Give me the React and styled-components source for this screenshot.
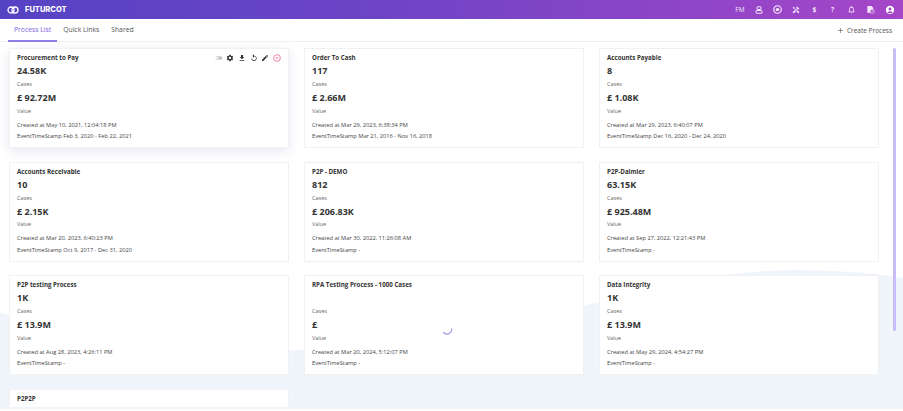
import React from 'react'
import styled, { createGlobalStyle } from 'styled-components'
import { Plus } from 'lucide-react'
import { MdSettings, MdFileDownload, MdReplay, MdEdit, MdToggleOff, MdAccountCircle, MdOutlineNotifications, MdHandyman } from 'react-icons/md'

const GlobalStyle = createGlobalStyle`
  html, body { margin: 0; padding: 0; height: 100%; background: #fff; overflow: hidden; }
  body { font-family: "Open Sans", "Noto Sans", sans-serif; color: #333; }
`

const Page = styled.div`
  position: relative;
  width: 903px;
  height: 411px;
  overflow: hidden;
  background: #fff;
`

const Header = styled.header`
  height: 19px;
  display: flex;
  align-items: center;
  justify-content: space-between;
  padding: 0 8px 0 7px;
  background: linear-gradient(90deg, #5543c4 0%, #6c44c6 40%, #a646c8 100%);
  color: #fff;
`

const Brand = styled.div`
  display: flex;
  align-items: center;
  gap: 6px;
  font-family: "Inter", sans-serif;
  font-size: 7.5px;
  font-weight: 800;
`

const HeaderIcons = styled.div`
  display: flex;
  align-items: center;
  gap: 10.2px;
  color: #f3e6fa;
`

const HeaderText = styled.span`
  font-size: 6.5px;
  font-weight: ${props => props.bold ? 700 : 400};
  width: ${props => props.bold ? '8px' : 'auto'};
  text-align: center;
  line-height: 8px;
`

const TabBar = styled.div`
  height: 22px;
  display: flex;
  align-items: stretch;
  justify-content: space-between;
  padding: 0 11px 0 8px;
  border-bottom: 1px solid #eef0f2;
`

const Tabs = styled.div`
  display: flex;
`

const Tab = styled.div`
  display: flex;
  align-items: center;
  padding: 0 6px;
  font-size: 6.8px;
  color: ${props => props.active ? '#7b66e0' : '#555'};
  border-bottom: 2px solid ${props => props.active ? '#8f7ce8' : 'transparent'};
  margin-bottom: -1px;
`

const CreateButton = styled.div`
  display: flex;
  align-items: center;
  gap: 3px;
  font-size: 6.5px;
  color: #555;
`

const Wave = styled.svg`
  position: absolute;
  left: 0;
  top: 262px;
  width: 903px;
  height: 147px;
`

const Content = styled.main`
  position: relative;
  height: 365px;
  overflow: hidden;
  padding: 6px 0 0 9px;
  box-sizing: border-box;
`

const Grid = styled.div`
  display: grid;
  grid-template-columns: repeat(3, 280px);
  grid-auto-rows: 100px;
  gap: 13.7px 15px;
`

const Card = styled.article`
  position: relative;
  box-sizing: border-box;
  height: ${props => props.partial ? '17.5px' : '100px'};
  background: #fff;
  border: 1px solid #f0f1f3;
  border-bottom: ${props => props.partial ? 'none' : '1px solid #f0f1f3'};
  padding: 4px 7px;
  box-shadow: ${props => props.raised ? '0 3px 10px rgba(90, 80, 160, 0.14)' : 'none'};
`

const Title = styled.div`
  height: 10px;
  line-height: 10px;
  font-size: 6.2px;
  font-weight: 700;
  color: #333;
`

const Metric = styled.div`
  height: 13px;
  line-height: 13px;
  margin-top: ${props => props.first ? '1px' : '2px'};
  font-size: 9px;
  font-weight: 700;
  color: #333;
`

const Label = styled.div`
  height: 10px;
  line-height: 10px;
  margin-top: ${props => props.tight ? '1.5px' : '2px'};
  font-size: 5.5px;
  color: #666;
`

const Meta = styled.div`
  height: 11.5px;
  line-height: 11.5px;
  font-size: 5.7px;
  color: #444;
  white-space: nowrap;
`

const MetaGroup = styled.div`
  margin-top: 4px;
`

const Actions = styled.div`
  position: absolute;
  top: 5px;
  right: 7px;
  display: flex;
  align-items: center;
  gap: 3.7px;
  color: #333;
`

const Spinner = styled.svg`
  position: absolute;
  left: 441px;
  top: 323px;
  width: 12px;
  height: 12px;
`

const ScrollThumb = styled.div`
  position: absolute;
  left: 893px;
  top: 48px;
  width: 3px;
  height: 283px;
  border-radius: 2px;
  background: #c9bdf7;
`

const processes = [
  { title: 'Procurement to Pay', cases: '24.58K', value: '£ 92.72M', created: 'May 10, 2021, 12:04:18 PM', stamp: 'Feb 3, 2020 - Feb 22, 2021', raised: true },
  { title: 'Order To Cash', cases: '117', value: '£ 2.66M', created: 'Mar 29, 2023, 6:38:34 PM', stamp: 'Mar 21, 2016 - Nov 16, 2018' },
  { title: 'Accounts Payable', cases: '8', value: '£ 1.08K', created: 'Mar 29, 2023, 6:40:07 PM', stamp: 'Dec 16, 2020 - Dec 24, 2020' },
  { title: 'Accounts Receivable', cases: '10', value: '£ 2.15K', created: 'Mar 20, 2023, 6:40:23 PM', stamp: 'Oct 9, 2017 - Dec 31, 2020' },
  { title: 'P2P - DEMO', cases: '812', value: '£ 206.83K', created: 'Mar 30, 2022, 11:26:08 AM', stamp: '-' },
  { title: 'P2P-Daimler', cases: '63.15K', value: '£ 925.48M', created: 'Sep 27, 2022, 12:21:43 PM', stamp: '-' },
  { title: 'P2P testing Process', cases: '1K', value: '£ 13.9M', created: 'Aug 28, 2023, 4:26:11 PM', stamp: '-' },
  { title: 'RPA Testing Process - 1000 Cases', cases: '', value: '£', created: 'Mar 20, 2024, 5:12:07 PM', stamp: '-' },
  { title: 'Data Integrity', cases: '1K', value: '£ 13.9M', created: 'May 29, 2024, 4:54:27 PM', stamp: '-' },
]

const Logo = () => (
  <svg width="12" height="8" viewBox="0 0 24 16" fill="none" stroke="#fff" strokeWidth="2.6">
    <circle cx="8" cy="8" r="6" />
    <circle cx="16" cy="8" r="6" />
  </svg>
)

const PrinterIcon = () => (
  <svg width="8" height="8" viewBox="0 0 16 16" fill="none" stroke="currentColor" strokeWidth="2">
    <rect x="4" y="1.5" width="8" height="5.5" rx="1" />
    <rect x="2" y="9" width="12" height="5.5" rx="1" />
  </svg>
)

const RingIcon = () => (
  <svg width="9" height="9" viewBox="0 0 18 18" fill="none" stroke="currentColor">
    <circle cx="9" cy="9" r="7.5" strokeWidth="2.4" />
    <rect x="5.5" y="6" width="7" height="6" rx="3" fill="currentColor" stroke="none" />
  </svg>
)

const FileClockIcon = () => (
  <svg width="9" height="9" viewBox="0 0 20 20">
    <path d="M3 2 H12 L16 6 V17 H3 Z" fill="currentColor" />
    <circle cx="14" cy="14" r="4.6" fill="#a646c8" stroke="currentColor" strokeWidth="1.4" />
    <path d="M14 11.8 V14.2 H16" fill="none" stroke="currentColor" strokeWidth="1.2" />
  </svg>
)

const StopIcon = () => (
  <svg width="8" height="8" viewBox="0 0 16 16" fill="none" stroke="#ee8fa8">
    <circle cx="8" cy="8" r="6.5" strokeWidth="2.2" />
    <circle cx="8" cy="8" r="2.6" fill="#f4b3c4" stroke="none" />
  </svg>
)

export default function App() {
  return (
    <Page>
      <GlobalStyle />
      <Header>
        <Brand><Logo />FUTURCOT</Brand>
        <HeaderIcons>
          <HeaderText>FM</HeaderText>
          <PrinterIcon />
          <RingIcon />
          <MdHandyman size={8} />
          <HeaderText bold>$</HeaderText>
          <HeaderText bold>?</HeaderText>
          <MdOutlineNotifications size={9} />
          <FileClockIcon />
          <MdAccountCircle size={10} color="#fff" />
        </HeaderIcons>
      </Header>
      <TabBar>
        <Tabs>
          <Tab active>Process List</Tab>
          <Tab>Quick Links</Tab>
          <Tab>Shared</Tab>
        </Tabs>
        <CreateButton><Plus size={7} />Create Process</CreateButton>
      </TabBar>
      <Wave viewBox="0 0 903 147" preserveAspectRatio="none">
        <path d="M0 51 C100 70 200 88 295 88 C420 88 500 65 595 41 C660 22 720 10 790 8 C840 8 880 12 903 16 L903 147 L0 147 Z" fill="#f0f5fc" />
      </Wave>
      <Content>
        <Grid>
          {processes.map((item, index) => (
            <Card key={index} raised={item.raised}>
              <Title>{item.title}</Title>
              {item.raised && (
                <Actions>
                  <MdToggleOff size={8} color="#c4c4c4" />
                  <MdSettings size={8} />
                  <MdFileDownload size={8} />
                  <MdReplay size={8} />
                  <MdEdit size={8} />
                  <StopIcon />
                </Actions>
              )}
              <Metric first>{item.cases}</Metric>
              <Label>Cases</Label>
              <Metric>{item.value}</Metric>
              <Label tight>Value</Label>
              <MetaGroup>
                <Meta>Created at {item.created}</Meta>
                <Meta>EventTimeStamp {item.stamp}</Meta>
              </MetaGroup>
            </Card>
          ))}
          <Card partial>
            <Title>P2P2P</Title>
          </Card>
        </Grid>
      </Content>
      <ScrollThumb />
      <Spinner viewBox="0 0 12 12" fill="none">
        <path d="M10.8 6 A4.8 4.8 0 0 1 2.5 9.5" stroke="#a89be8" strokeWidth="1.2" strokeLinecap="round" />
      </Spinner>
    </Page>
  )
}
